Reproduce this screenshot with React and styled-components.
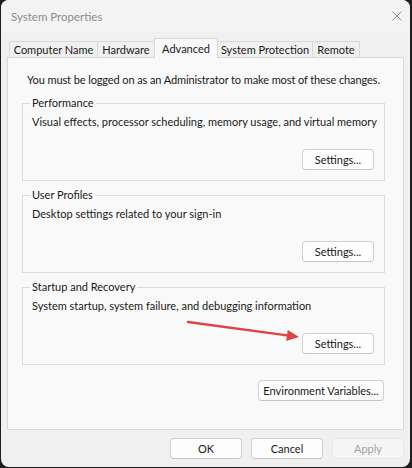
import React from 'react';
import styled, { createGlobalStyle } from 'styled-components';

const Global = createGlobalStyle`
  html, body { margin: 0; padding: 0; background: #1e1e1e; }
  body {
    width: 412px; height: 468px; overflow: hidden;
    font-family: Lato, "Liberation Sans", Arial, sans-serif;
    font-size: 11px; color: #1a1a1a;
  }
  * { box-sizing: border-box; }
`;

const Window = styled.div`
  margin-left: 1px;
  width: 409px;
  height: 467px;
  background: #f0f0f0;
  border-radius: 8px;
  overflow: hidden;
  display: flex;
  flex-direction: column;
`;

const TitleBar = styled.div`
  height: 32px;
  flex: none;
  background: #f3f3f3;
  display: flex;
  align-items: center;
  justify-content: space-between;
  padding: 0 8px 0 10px;
`;

const Title = styled.span`
  color: #8c8c8c;
  font-size: 11.5px;
`;

const CloseGlyph = styled.svg`
  width: 10px;
  height: 10px;
  margin-top: -1px;
`;

const Body = styled.div`
  flex: 1;
  display: flex;
  flex-direction: column;
  padding: 6px 6px 0 6px;
`;

const TabRow = styled.div`
  height: 19px;
  display: flex;
  align-items: flex-end;
  padding-left: 2px;
`;

const Tab = styled.div`
  width: ${p => p.$w}px;
  height: ${p => (p.$active ? 20 : 16)}px;
  margin-bottom: ${p => (p.$active ? -1 : 0)}px;
  margin-right: -1px;
  border: 1px solid #d9d9d9;
  border-bottom: 0;
  background: ${p => (p.$active ? '#f9f9f9' : '#f0f0f0')};
  position: relative;
  z-index: ${p => (p.$active ? 2 : 1)};
  display: flex;
  align-items: center;
  justify-content: center;
  padding-bottom: ${p => (p.$active ? 1 : 0)}px;
  white-space: nowrap;
`;

const Panel = styled.div`
  position: relative;
  background: #f9f9f9;
  border: 1px solid #d9d9d9;
  padding: 14px 18px 28px 14px;
  display: flex;
  flex-direction: column;
`;

const Notice = styled.div`
  line-height: 16px;
  margin-left: 5px;
  white-space: nowrap;
  letter-spacing: -0.1px;
`;

const Groups = styled.div`
  display: flex;
  flex-direction: column;
  gap: 6px;
  margin-top: 7px;
`;

const Group = styled.fieldset`
  margin: 0;
  min-width: 0;
  border: 1px solid #dcdcdc;
  padding: 0 10px 10px 7px;
  display: flex;
  flex-direction: column;
`;

const Legend = styled.legend`
  padding: 0 2px;
  line-height: 16px;
`;

const Desc = styled.div`
  margin: 3px 0 0 2px;
  line-height: 16px;
  white-space: nowrap;
`;

const ButtonRow = styled.div`
  display: flex;
  justify-content: flex-end;
  gap: 9px;
  margin-top: ${p => p.$top || 0}px;
  padding-right: ${p => p.$right || 0}px;
`;

const Button = styled.button`
  width: ${p => p.$w}px;
  height: 21px;
  padding: 0;
  font: inherit;
  color: ${p => (p.disabled ? '#a3a3a3' : '#1a1a1a')};
  background: ${p => (p.disabled ? '#f5f5f5' : '#fdfdfd')};
  border: 1px solid ${p => (p.disabled ? '#e6e6e6' : '#d0d0d0')};
  border-bottom-color: ${p => (p.disabled ? '#e6e6e6' : '#c4c4c4')};
  border-radius: 4px;
  white-space: nowrap;
`;

const Footer = styled.div`
  display: flex;
  justify-content: flex-end;
  gap: 9px;
  margin-top: 8px;
`;

const Pointer = styled.svg`
  position: absolute;
  left: 175px;
  top: 255px;
  width: 125px;
  height: 35px;
  pointer-events: none;
`;

const groups = [
  { title: 'Performance', text: 'Visual effects, processor scheduling, memory usage, and virtual memory' },
  { title: 'User Profiles', text: 'Desktop settings related to your sign-in' },
  { title: 'Startup and Recovery', text: 'System startup, system failure, and debugging information' },
];

const tabs = [
  { label: 'Computer Name', w: 89 },
  { label: 'Hardware', w: 58 },
  { label: 'Advanced', w: 64, active: true },
  { label: 'System Protection', w: 96 },
  { label: 'Remote', w: 48 },
];

export default function App() {
  return (
    <>
      <Global />
      <Window>
        <TitleBar>
          <Title>System Properties</Title>
          <CloseGlyph viewBox="0 0 10 10">
            <path d="M0.5 0.5 L9.5 9.5 M9.5 0.5 L0.5 9.5" stroke="#8f8f8f" strokeWidth="1" fill="none" />
          </CloseGlyph>
        </TitleBar>
        <Body>
          <TabRow>
            {tabs.map(t => (
              <Tab key={t.label} $w={t.w} $active={t.active}>{t.label}</Tab>
            ))}
          </TabRow>
          <Panel>
            <Notice>You must be logged on as an Administrator to make most of these changes.</Notice>
            <Groups>
              {groups.map(g => (
                <Group key={g.title}>
                  <Legend>{g.title}</Legend>
                  <Desc>{g.text}</Desc>
                  <ButtonRow $top={19}>
                    <Button $w={72}>Settings...</Button>
                  </ButtonRow>
                </Group>
              ))}
            </Groups>
            <ButtonRow $top={15} $right={1}>
              <Button $w={126}>Environment Variables...</Button>
            </ButtonRow>
            <Pointer viewBox="0 0 125 35">
              <line x1="5" y1="9" x2="106" y2="22.6" stroke="#dd4545" strokeWidth="2.4" strokeLinecap="round" />
              <polygon points="116,24 103.2,28 104.8,17" fill="#dd4545" />
            </Pointer>
          </Panel>
          <Footer>
            <Button $w={72}>OK</Button>
            <Button $w={72}>Cancel</Button>
            <Button $w={72} disabled>Apply</Button>
          </Footer>
        </Body>
      </Window>
    </>
  );
}
